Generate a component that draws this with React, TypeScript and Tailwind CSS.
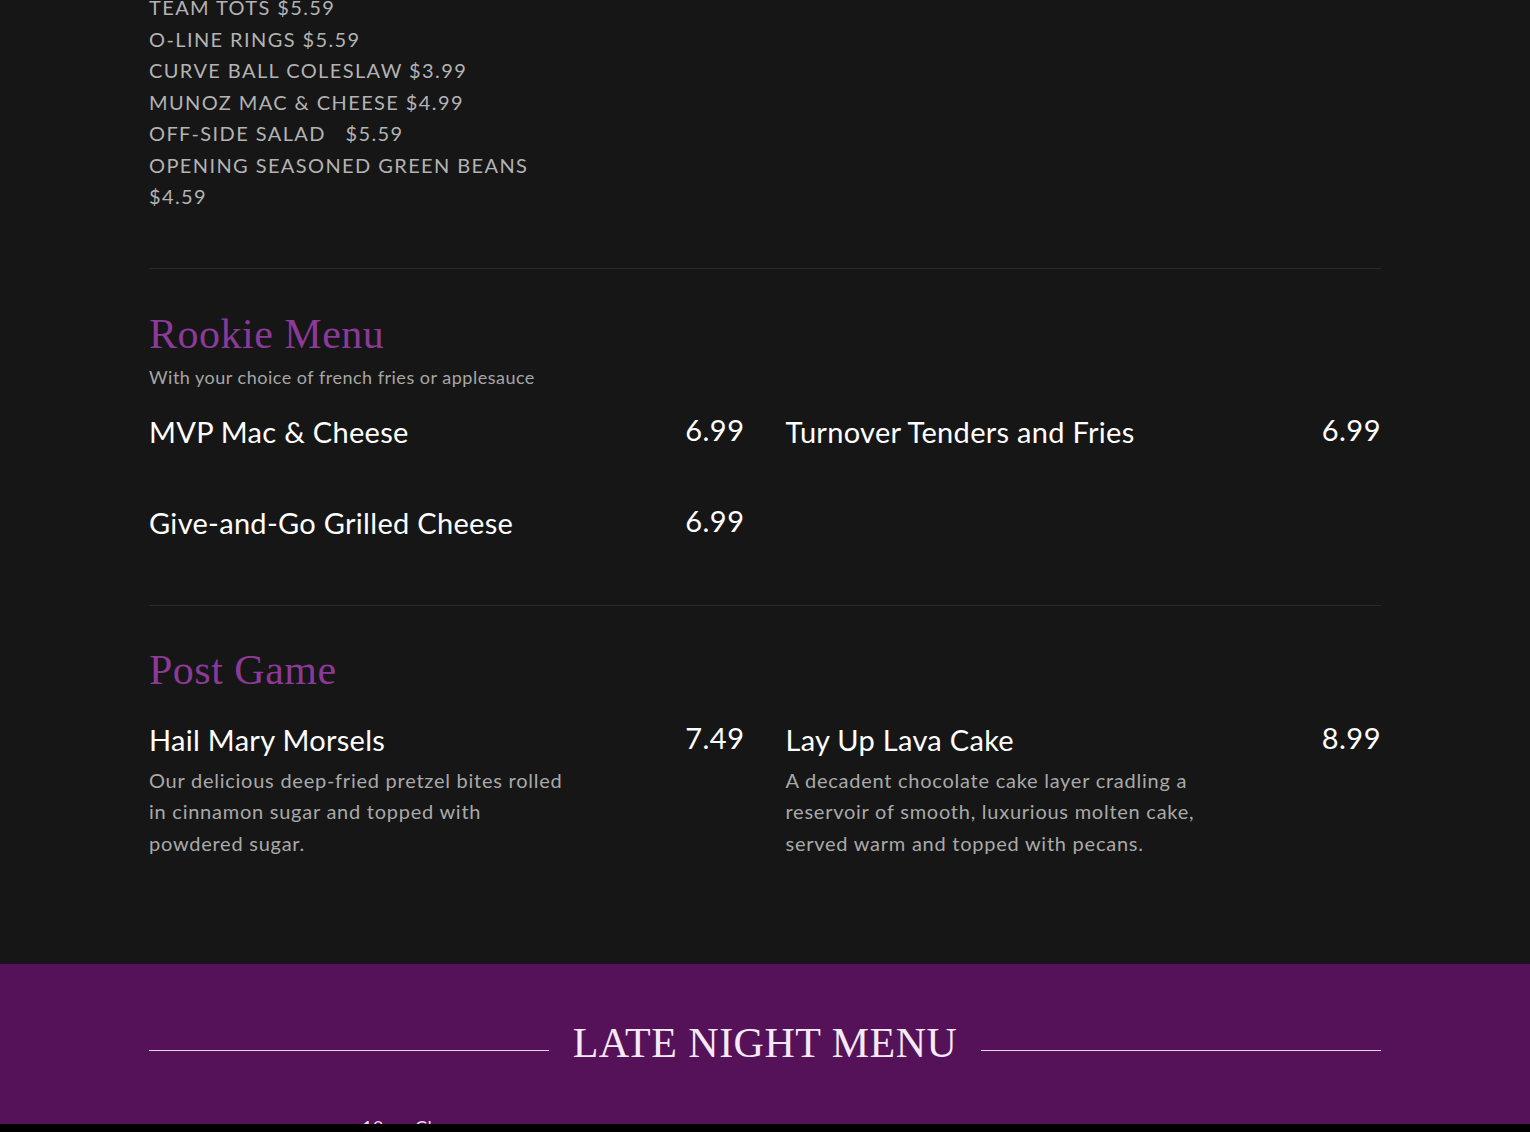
import React from "react";

const sides = [
  "TEAM TOTS $5.59",
  "O-LINE RINGS $5.59",
  "CURVE BALL COLESLAW $3.99",
  "MUNOZ MAC & CHEESE $4.99",
  "OFF-SIDE SALAD   $5.59",
  "OPENING SEASONED GREEN BEANS $4.59",
];

const body = { fontFamily: "Lato, 'Open Sans', sans-serif" };
const slab = { fontFamily: "'Liberation Serif', 'DejaVu Serif', serif" };

function Item({ name, price, desc }: { name: string; price: string; desc?: string }) {
  return (
    <div className="flex flex-col">
      <div className="flex items-start justify-between">
        <h3 className="text-[29px] leading-[40px] text-white tracking-[0.3px]" style={body}>{name}</h3>
        <span className="pt-[1px] text-[29px] leading-[34px] text-white tracking-[0.5px]" style={body}>{price}</span>
      </div>
      {desc && (
        <p className="mt-[5px] max-w-[432px] text-[20px] leading-[31.5px] text-[#a9a9a9] tracking-[0.75px]" style={body}>
          {desc}
        </p>
      )}
    </div>
  );
}

export default function App() {
  return (
    <div className="flex h-[1132px] flex-col overflow-hidden bg-[#161616]">
      <div className="mx-auto w-[1232px] shrink-0">
        <ul className="-mt-[8px] max-w-[410px] text-[20px] leading-[31.5px] tracking-[1.4px] text-[#b3b3b3] whitespace-pre-wrap" style={body}>
          {sides.map((s) => (
            <li key={s}>{s}</li>
          ))}
        </ul>
        <div className="mt-[55px] h-px bg-[#2a2a2a]" />

        <section className="pt-[39px] pb-[62px]">
          <h2 className="text-[42px] leading-[52px] text-[#8b3a97] tracking-[0.5px]" style={slab}>Rookie Menu</h2>
          <p className="mt-[5px] text-[18px] leading-[24px] text-[#a6a6a6] tracking-[0.5px]" style={body}>
            With your choice of french fries or applesauce
          </p>
          <div className="mt-[23px] grid grid-cols-2 gap-x-[41px] gap-y-[51px]">
            <Item name="MVP Mac & Cheese" price="6.99" />
            <Item name="Turnover Tenders and Fries" price="6.99" />
            <Item name="Give-and-Go Grilled Cheese" price="6.99" />
          </div>
        </section>
        <div className="h-px bg-[#2a2a2a]" />

        <section className="pt-[38px]">
          <h2 className="text-[42px] leading-[52px] text-[#8b3a97] tracking-[0.5px]" style={slab}>Post Game</h2>
          <div className="mt-[24px] grid grid-cols-2 gap-x-[41px]">
            <Item
              name="Hail Mary Morsels"
              price="7.49"
              desc="Our delicious deep-fried pretzel bites rolled in cinnamon sugar and topped with powdered sugar."
            />
            <Item
              name="Lay Up Lava Cake"
              price="8.99"
              desc="A decadent chocolate cake layer cradling  a reservoir of smooth, luxurious molten cake, served warm and topped with pecans."
            />
          </div>
        </section>
      </div>

      <div className="mt-auto h-[161px] shrink-0 overflow-hidden border-t border-[#2a0a2c] bg-[#561259]">
        <div className="mx-auto flex w-[1232px] items-center gap-[24px] pt-[55px]">
          <div className="mt-[14px] h-px flex-1 bg-[#e9d6ea]" />
          <h2 className="text-[42px] leading-[48px] text-[#f6e9f6] tracking-[0.5px]" style={slab}>LATE NIGHT MENU</h2>
          <div className="mt-[14px] h-px flex-1 bg-[#e9d6ea]" />
        </div>
        <div className="mx-auto mt-[50px] flex w-[1232px] pl-[213px] text-[18px] leading-[20px] text-[#eadcea] tracking-[0.5px]" style={body}>
          <span>10pm Close</span>
        </div>
      </div>
      <div className="h-[8px] shrink-0 bg-black" />
    </div>
  );
}
